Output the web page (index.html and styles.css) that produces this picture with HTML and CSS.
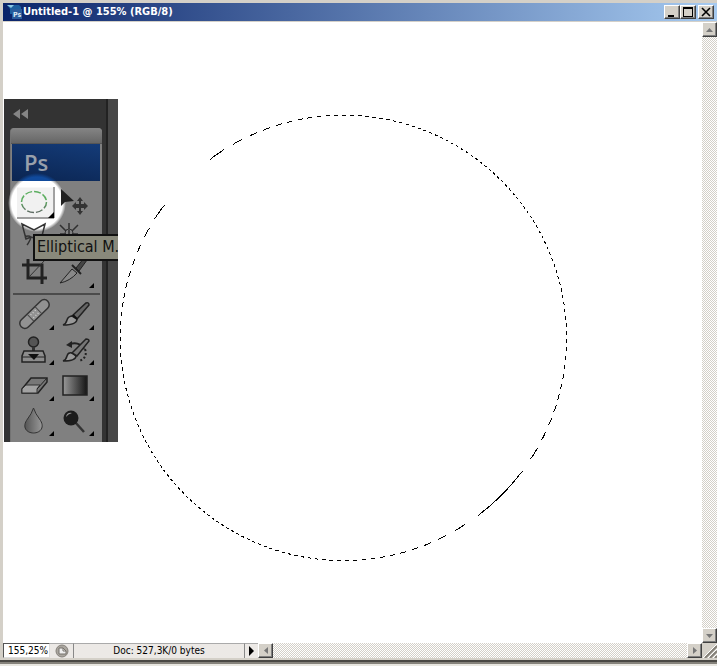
FILE: index.html
```html
<!DOCTYPE html>
<html lang="en">
<head>
<meta charset="utf-8">
<title>Untitled-1 @ 155% (RGB/8)</title>
<link rel="stylesheet" href="styles.css">
</head>
<body>
<div class="window">
  <header class="titlebar">
    <svg class="app-icon" width="16" height="16" viewBox="0 0 16 16" aria-hidden="true">
      <path d="M1 1h12l2 2v3H6v4H4V5z" fill="#1d5f9f"/>
      <path d="M1 1h7L5 4z" fill="#8cc8e4"/>
      <rect x="6" y="5" width="10" height="10" fill="#2a5c9c"/>
      <text class="app-letters" x="7" y="13">Ps</text>
    </svg>
    <h1 class="title">Untitled-1 @ 155% (RGB/8)</h1>
    <div class="caption-buttons">
      <button class="bevel caption" aria-label="Minimize"><svg width="12" height="12" viewBox="0 0 12 12"><path d="M2 9h6v2H2z"/></svg></button>
      <button class="bevel caption" aria-label="Maximize"><svg width="12" height="12" viewBox="0 0 12 12"><path d="M1 1h10v10H1zM2 3v7h8V3z" fill-rule="evenodd"/></svg></button>
      <button class="bevel caption close" aria-label="Close"><svg width="12" height="12" viewBox="0 0 12 12"><path d="M2 2l8 8M10 2l-8 8" stroke="#000" stroke-width="1.600"/></svg></button>
    </div>
  </header>

  <main class="canvas">
    <svg class="selection" width="450" height="450" viewBox="0 0 450 450" shape-rendering="crispEdges" role="img" aria-label="Elliptical selection">
      <defs>
        <pattern id="ants" width="8" height="8" patternUnits="userSpaceOnUse">
          <path d="M2 0h4v1H2zM1 1h4v1H1zM0 2h4v1H0zM0 3h3v1H0zM7 3h1v1H7zM0 4h2v1H0zM6 4h2v1H6zM0 5h1v1H0zM5 5h3v1H5zM4 6h4v1H4zM3 7h4v1H3z"/>
        </pattern>
      </defs>
      <ellipse cx="225.400" cy="224.900" rx="223.200" ry="222.700" fill="none" stroke="url(#ants)"/>
    </svg>

    <aside class="toolbox" aria-label="Tools">
      <button class="collapse" aria-label="Collapse"><svg width="16" height="10" viewBox="0 0 16 10"><path d="M7 0v10L0 5zM15 0v10L8 5z" fill="#858585"/></svg></button>
      <div class="palette">
        <div class="grip"></div>
        <div class="brand">Ps</div>
        <div class="tools">
          <button class="tool active" aria-label="Elliptical Marquee">
            <svg viewBox="14 184 40 35"><defs><linearGradient id="ring" x2="0" y2="1"><stop offset=".4" stop-color="#5cae60"/><stop offset="1" stop-color="#5d6a62"/></linearGradient></defs><path d="M17 187.500h36v30H17z" fill="#f1f1f1"/><path d="M17 218H54V187" fill="none" stroke="#444"/><ellipse cx="34" cy="202" rx="12.500" ry="10.500" fill="none" stroke="url(#ring)" stroke-width="1.500" stroke-dasharray="7 2"/><path d="M54 212v6h-6z"/></svg>
          </button>
          <button class="tool" aria-label="Move">
            <svg viewBox="54 184 40 35"><path d="M61 189v17l4-4 9-1z" fill="#202020"/><path d="M80 197l3 4h-2v3h3v-2l4 4-4 4v-2h-3v3h2l-3 4-3-4h2v-3h-3v2l-4-4 4-4v2h3v-3h-2z" fill="#333"/></svg>
          </button>
          <button class="tool" aria-label="Lasso">
            <svg viewBox="14 219 40 35"><path d="M22 224l12 6 11-6-4 16-10-3-5 2zM26 239q-2-3 2-3t2 4-3 5" fill="none" stroke="#333" stroke-width="1.500"/></svg>
          </button>
          <button class="tool" aria-label="Magic Wand">
            <svg viewBox="54 219 40 35"><path d="M69 223v6M60 225l6 6M78 225l-6 6M60 234h6M72 234h6M69 230v6" stroke="#303030" stroke-width="1.500"/><circle cx="69" cy="233" r="4" fill="none" stroke="#303030"/></svg>
          </button>
          <button class="tool" aria-label="Crop">
            <svg viewBox="14 254 40 35"><path d="M22 265h20v19M28 259v19h19" fill="none" stroke="#222" stroke-width="3"/><path d="M29 277l16-17" stroke="#333"/></svg>
          </button>
          <button class="tool" aria-label="Slice">
            <svg viewBox="54 254 40 35"><path d="M60 283l12-14 5 4q-7 8-17 10z" fill="#888" stroke="#222"/><path d="M72 265l9 9" stroke="#222" stroke-width="2"/><path d="M76 268l12-15 2 3-11 15z" fill="#444" stroke="#222"/><path d="M94 283v5h-5z"/></svg>
          </button>
        </div>
        <hr class="divider">
        <div class="tools">
          <button class="tool" aria-label="Healing Brush">
            <svg viewBox="14 298 40 35"><g transform="rotate(-44 34.500 314)"><rect x="16" y="309" width="37" height="10" rx="5" fill="#929292" stroke="#333" stroke-width="1.500"/><path d="M29 309v10M40 309v10" stroke="#444"/><path d="M31 312h8M31 316h8" stroke="#ccc" stroke-width="1.500" stroke-dasharray="1 2"/></g><path d="M54 325v5h-5z"/></svg>
          </button>
          <button class="tool" aria-label="Brush">
            <svg viewBox="54 298 40 35"><path d="M63 325q3-1 4-5t6-4l4 3q0 6-14 6z" fill="#999" stroke="#222" stroke-width="1.500"/><path d="M72 316l14-13q3-1 3 2l-12 14z" fill="#666" stroke="#222" stroke-width="1.500"/><path d="M73 315l4 4" stroke="#111" stroke-width="2"/><path d="M94 325v5h-5z"/></svg>
          </button>
          <button class="tool" aria-label="Clone Stamp">
            <svg viewBox="14 333 40 35"><circle cx="33.500" cy="342" r="5" fill="#555" stroke="#222" stroke-width="1.500"/><path d="M32 347h3v4h-3z" fill="#333"/><path d="M24 351h19l2 5v6H22v-6z" fill="#8c8c8c" stroke="#222" stroke-width="1.500"/><path d="M22 357h23" stroke="#222"/><path d="M28 354h11l-5 6z" fill="#111"/><path d="M54 360v5h-5z"/></svg>
          </button>
          <button class="tool" aria-label="History Brush">
            <svg viewBox="54 333 40 35"><path d="M66 345l6-4v7z" fill="#222"/><path d="M70 344q9-3 14 5" fill="none" stroke="#222" stroke-width="2"/><path d="M85 349q3 9-6 12" fill="none" stroke="#222" stroke-width="2" stroke-dasharray="2 2"/><path d="M63 361q3-1 4-5t5-3l4 3q0 5-13 5z" fill="#999" stroke="#222" stroke-width="1.500"/><path d="M72 353l14-14q3 0 3 2l-12 15z" fill="#777" stroke="#222" stroke-width="1.500"/><path d="M94 360v5h-5z"/></svg>
          </button>
          <button class="tool" aria-label="Eraser">
            <svg viewBox="14 368 40 35"><path d="M22 389l9-11h16v4l-9 11H22z" fill="#777" stroke="#222" stroke-width="1.500"/><path d="M22 389l4-4h14l-3 4v4H22z" fill="#a2a2a2" stroke="#333"/><path d="M37 389l10-11" stroke="#222"/><path d="M54 396v5h-5z"/></svg>
          </button>
          <button class="tool" aria-label="Gradient">
            <svg viewBox="54 368 40 35"><defs><linearGradient id="ramp"><stop offset="0" stop-color="#999"/><stop offset="1" stop-color="#151515"/></linearGradient></defs><rect x="63" y="376" width="24" height="19" fill="url(#ramp)" stroke="#222" stroke-width="1.500"/><path d="M94 396v5h-5z"/></svg>
          </button>
          <button class="tool" aria-label="Blur">
            <svg viewBox="14 403 40 35"><defs><linearGradient id="drop"><stop offset="0" stop-color="#555"/><stop offset="1" stop-color="#999"/></linearGradient></defs><path d="M33.500 408q2 6 6 11c6 8 1 14-6 14s-12-6-6-14q4-5 6-11z" fill="url(#drop)" stroke="#333"/><path d="M54 431v5h-5z"/></svg>
          </button>
          <button class="tool" aria-label="Dodge">
            <svg viewBox="54 403 40 35"><path d="M75 422l9 10" stroke="#333" stroke-width="2.500"/><circle cx="71" cy="418" r="7.500" fill="#1c1c1c"/><path d="M66 417q1-5 6-4-4 1-6 4z" fill="#999"/><path d="M94 431v5h-5z"/></svg>
          </button>
        </div>
      </div>
      <div class="tooltip" role="tooltip">Elliptical M.</div>
    </aside>
  </main>

  <div class="scroll vertical">
    <button class="bevel arrow" aria-label="Scroll up"><svg width="7" height="4" viewBox="0 0 7 4"><path d="M0 4l3.500-4L7 4z"/></svg></button>
    <button class="bevel arrow" aria-label="Scroll down"><svg width="7" height="4" viewBox="0 0 7 4"><path d="M0 0h7L3.500 4z"/></svg></button>
  </div>

  <footer class="status">
    <input class="zoom" aria-label="Zoom" value="155,25%">
    <button class="version" aria-label="Version Cue"><svg width="14" height="14" viewBox="0 0 14 14"><circle cx="7" cy="7" r="6" fill="#aaa69f" stroke="#85817b"/><path d="M4 4h4l3 3v3H4z" fill="#eee" stroke="#77736d"/><path d="M8 4v3h3" fill="none" stroke="#77736d"/></svg></button>
    <output class="doc">Doc: 527,3K/0 bytes</output>
    <button class="menu" aria-label="Status menu"><svg width="5" height="10" viewBox="0 0 5 10"><path d="M0 0l5 5-5 5z"/></svg></button>
    <div class="scroll horizontal">
      <button class="bevel arrow" aria-label="Scroll left"><svg width="4" height="7" viewBox="0 0 4 7"><path d="M4 0v7L0 3.500z"/></svg></button>
      <button class="bevel arrow" aria-label="Scroll right"><svg width="4" height="7" viewBox="0 0 4 7"><path d="M0 0v7l4-3.500z"/></svg></button>
    </div>
  </footer>
  <svg class="resize" viewBox="0 0 15 15" aria-hidden="true"><path d="M3 15L15 3M8 15l7-7M13 15l2-2" stroke="#858179" stroke-width="2"/><path d="M1 15L15 1M6 15l9-9M11 15l4-4" stroke="#fff"/></svg>
</div>
</body>
</html>
```
FILE: styles.css
```css
* { box-sizing: border-box; }

body {
  margin: 0;
  font-family: "DejaVu Sans Condensed", "DejaVu Sans", sans-serif;
  font-size: 10px;
  background: #d4d0c8;
}

button {
  display: flex;
  align-items: center;
  justify-content: center;
  margin: 0;
  padding: 0;
  border: 0;
  background: none;
}

.window {
  display: grid;
  grid-template-columns: minmax(0, 1fr) 15px;
  grid-template-rows: 19px minmax(0, 1fr) 15px;
  height: 100vh;
  padding: 3px 0 8px 3px;
  background: linear-gradient(to top, #e8e6e0 2px, #85827b 2px 4px, #4a4844 4px 6px, #d4d0c8 6px);
}

.titlebar {
  grid-column: 1 / -1;
  display: flex;
  align-items: center;
  padding-left: 3px;
  background: linear-gradient(90deg, #0a246a, #a6caf0);
  border-bottom: 1px solid #d4d0c8;
}

.app-letters {
  font-size: 7px;
  font-weight: bold;
  fill: #dbe8f4;
}

.title {
  flex: 1;
  margin: 0;
  padding-left: 1px;
  font-size: 11px;
  line-height: 16px;
  color: #fff;
}

.caption-buttons { display: flex; padding-right: 3px; }

.bevel {
  background: #d4d0c8;
  border: 1px solid;
  border-color: #fff #404040 #404040 #fff;
  box-shadow: inset -1px -1px #808080;
}

.caption { width: 16px; height: 14px; }
.close { margin-left: 2px; }

.canvas {
  position: relative;
  overflow: hidden;
  background: #fff;
}

.selection {
  position: absolute;
  left: 115px;
  top: 91px;
}

.toolbox {
  position: absolute;
  left: 1px;
  top: 77px;
  width: 114px;
  overflow: hidden;
  padding: 0 16px 0 6px;
  background: linear-gradient(90deg, #333 0 102px, #222 102px 104px, #474747 104px);
}

.collapse { height: 29px; padding-left: 3px; }

.palette {
  position: relative;
  padding-bottom: 4px;
  background: #808080;
  border-radius: 4px 4px 0 0;
  border-left: 1px solid #737373;
}

.palette::before {
  content: "";
  position: absolute;
  left: -3px;
  top: 46px;
  width: 58px;
  height: 58px;
  border-radius: 50%;
  background: radial-gradient(closest-side, #fff 88%, rgba(255, 255, 255, 0));
}

.grip {
  height: 16px;
  border-radius: 4px 4px 0 0;
  border-bottom: 1px solid #555;
  background: linear-gradient(#858585, #666);
}

.brand {
  position: relative;
  height: 37px;
  margin: 0 2px 0 1px;
  padding-left: 12px;
  font-family: "Open Sans", sans-serif;
  font-size: 22px;
  font-weight: 600;
  line-height: 37px;
  color: #98a0ab;
  background:
    radial-gradient(circle at 25px 58px, #104a9c 25px, transparent 29px),
    linear-gradient(10deg, #0b2551, #143b78);
}

.tools {
  position: relative;
  display: grid;
  grid-template-columns: 40px 40px;
  padding: 3px 0 0 3px;
}

.tool { height: 35px; }
.tool svg { width: 40px; height: 35px; overflow: visible; }

.divider {
  height: 2px;
  margin: 4px 2px 0;
  border: 0;
  background: #4b4b4b;
}

.tooltip {
  position: absolute;
  left: 29px;
  top: 135px;
  right: 0;
  height: 27px;
  padding-left: 2px;
  border: 2px solid #111;
  border-right: 0;
  background: #89897b;
  color: #111;
  font-size: 16px;
  line-height: 22px;
  white-space: nowrap;
}

.scroll {
  display: flex;
  justify-content: space-between;
  background: repeating-conic-gradient(#fff 0 25%, #d4d0c8 0 50%) 0 0 / 2px 2px;
}

.vertical { flex-direction: column; }
.horizontal { flex: 1; }
.arrow { width: 15px; height: 15px; fill: #777; }

.status { display: flex; background: #ece9e6; }

.zoom {
  width: 47px;
  padding: 0 0 0 4px;
  border: 1px solid #555;
  border-right-color: #ddd;
  border-bottom-color: #ddd;
  background: #fff;
  font: inherit;
}

.version { width: 23px; border-top: 1px solid #aaa; }

.doc {
  width: 171px;
  border-left: 1px solid #888;
  border-top: 1px solid #aaa;
  text-align: center;
  line-height: 14px;
}

.menu {
  width: 14px;
  border-left: 1px solid #888;
  border-top: 1px solid #aaa;
}

.resize { width: 15px; height: 15px; background: #d4d0c8; }
```
